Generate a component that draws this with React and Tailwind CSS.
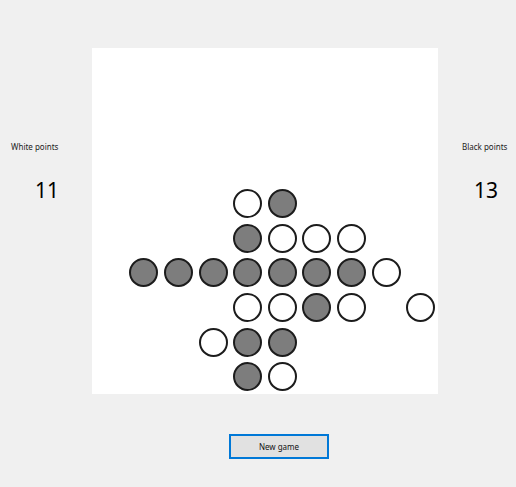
const BOARD = [
  '..........',
  '..........',
  '..........',
  '..........',
  '....WB....',
  '....BWWW..',
  '.BBBBBBBW.',
  '....WWBW.W',
  '...WBB....',
  '....BW....',
]

function Cell({ v }) {
  if (v === '.') return <div />
  return (
    <div className="flex items-center justify-center">
      <div
        className={
          'w-[29px] h-[29px] rounded-full border-2 border-[#1c1c1c] ' +
          (v === 'B' ? 'bg-[#7d7d7d]' : 'bg-white')
        }
      />
    </div>
  )
}

export default function App() {
  const font = { fontFamily: '"Noto Sans", "Open Sans", sans-serif' }
  return (
    <div className="w-[516px] h-[487px] bg-[#f0f0f0] text-black overflow-hidden" style={font}>
      <div className="flex pt-[48px]">
        {/* white score */}
        <div className="w-[92px] pt-[94px]">
          <div className="pl-[11px] text-[8px] leading-[10px] text-[#222]">White points</div>
          <div className="mt-[26px] pl-[35px] text-[21px] leading-[24px]">11</div>
        </div>

        {/* board */}
        <div className="w-[346px] h-[346px] bg-white grid grid-cols-10 grid-rows-10">
          {BOARD.flatMap((row, r) =>
            row.split('').map((v, c) => <Cell key={r + '-' + c} v={v} />)
          )}
        </div>

        {/* black score */}
        <div className="flex-1 pt-[94px]">
          <div className="pl-[24px] text-[8px] leading-[10px] text-[#222]">Black points</div>
          <div className="mt-[26px] pl-[36px] text-[21px] leading-[24px]">13</div>
        </div>
      </div>

      <div className="pt-[40px] pl-[229px]">
        <button className="w-[100px] h-[25px] bg-[#e1e1e1] border-2 border-[#0078d7] text-[8px] text-[#111] flex items-center justify-center">
          New game
        </button>
      </div>
    </div>
  )
}
